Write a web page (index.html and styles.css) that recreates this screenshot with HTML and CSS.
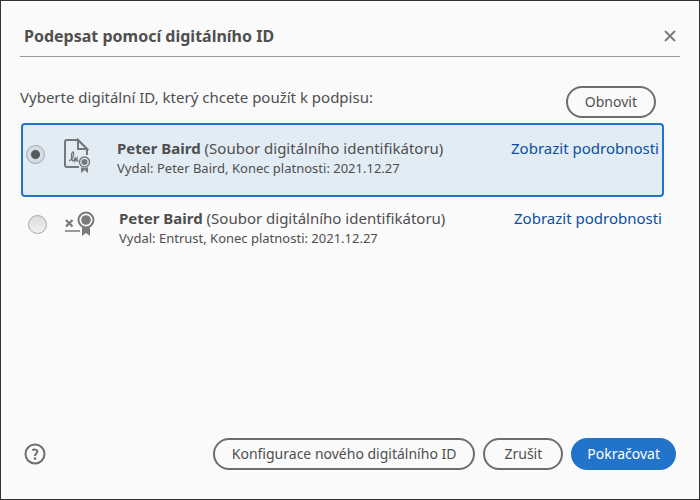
FILE: index.html
```html
<!DOCTYPE html>
<html lang="cs">
<head>
    <meta charset="UTF-8">
    <meta name="viewport" content="width=device-width, initial-scale=1.0">
    <title>Podepsat pomocí digitálního ID</title>
    <link rel="stylesheet" href="styles.css">
</head>
<body>
    <form class="dialog">
        <header class="dialog-header">
            <h1>Podepsat pomocí digitálního ID</h1>
            <button type="button" class="icon-button" aria-label="Zavřít">
                <svg width="12" height="12" viewBox="0 0 12 12">
                    <path d="M1 1 L11 11 M11 1 L1 11" fill="none" stroke="#7c7c7c" stroke-width="2"/>
                </svg>
            </button>
        </header>

        <div class="intro">
            <p id="prompt">Vyberte digitální ID, který chcete použít k podpisu:</p>
            <button type="button" class="pill">Obnovit</button>
        </div>

        <!-- List of IDs -->
        <div class="id-list" role="radiogroup" aria-labelledby="prompt">
            <div class="id-row selected">
                <input type="radio" name="digitalId" id="id1" checked>
                <svg class="id-icon" width="32" height="40" viewBox="0 0 32 40">
                    <path d="M16 29 H4 Q2 29 2 27 V4 Q2 2 4 2 H15 L24 11 V17" fill="none" stroke="#74787b" stroke-width="2"/>
                    <path d="M15 2 V11 H24 Z" fill="#e2ecf5" stroke="#74787b" stroke-width="2"/>
                    <path d="M6 23 C9 22 12 16 10 14 C8 14 8 22 10 23 C11 23 11 21 12 20 V23 L14 20 V23 H16" fill="none" stroke="#74787b" stroke-width="1.300"/>
                    <path d="M18 26 H25 V35 L21.500 32 L18 35 Z" fill="#74787b"/>
                    <circle cx="21.500" cy="24" r="6.200" fill="#e2ecf5"/>
                    <circle cx="21.500" cy="24" r="5" fill="#e2ecf5" stroke="#74787b" stroke-width="1.400"/>
                    <circle cx="21.500" cy="24" r="3" fill="#74787b"/>
                </svg>
                <label class="id-text" for="id1">
                    <span class="id-name"><b>Peter Baird</b> (Soubor digitálního identifikátoru)</span>
                    <span class="id-detail">Vydal: Peter Baird, Konec platnosti: 2021.12.27</span>
                </label>
                <a href="#" class="details">Zobrazit podrobnosti</a>
            </div>
            <div class="id-row">
                <input type="radio" name="digitalId" id="id2">
                <svg class="id-icon" width="32" height="40" viewBox="0 0 32 40">
                    <path d="M1 12 L7.500 18.500 M7.500 12 L1 18.500" fill="none" stroke="#7b7b7b" stroke-width="2.400"/>
                    <path d="M0 23 H15" stroke="#9a9a9a" stroke-width="2"/>
                    <path d="M17 17 H25 V28 L21 25 L17 28 Z" fill="#7b7b7b"/>
                    <circle cx="21" cy="12" r="7.500" fill="#fafafa" stroke="#7b7b7b" stroke-width="2"/>
                    <circle cx="21" cy="12" r="4.800" fill="#7b7b7b"/>
                </svg>
                <label class="id-text" for="id2">
                    <span class="id-name"><b>Peter Baird</b> (Soubor digitálního identifikátoru)</span>
                    <span class="id-detail">Vydal: Entrust, Konec platnosti: 2021.12.27</span>
                </label>
                <a href="#" class="details">Zobrazit podrobnosti</a>
            </div>
        </div>

        <footer class="dialog-footer">
            <button type="button" class="icon-button help" aria-label="Nápověda">
                <svg width="22" height="22" viewBox="0 0 22 22">
                    <circle cx="11" cy="11" r="9.500" fill="none" stroke="#6e6e6e" stroke-width="2"/>
                    <path d="M8.300 7.300 C9.500 6.300 13.400 6 13.400 8.600 C13.400 10.600 11 10.600 11 13" fill="none" stroke="#6e6e6e" stroke-width="1.900"/>
                    <circle cx="11" cy="15.600" r="1.300" fill="#6e6e6e"/>
                </svg>
            </button>
            <button type="button" class="pill">Konfigurace nového digitálního ID</button>
            <button type="button" class="pill cancel">Zrušit</button>
            <button type="submit" class="pill primary">Pokračovat</button>
        </footer>
    </form>
</body>
</html>
```
FILE: styles.css
```css
* {
    box-sizing: border-box;
}

body {
    margin: 0;
    font-family: "Noto Sans", "Open Sans", sans-serif;
    font-size: 15px;
    line-height: 20px;
    color: #4f4f4f;
    background: #fafafa;
}

.dialog {
    display: flex;
    flex-direction: column;
    min-height: 100vh;
    padding: 14px 19px 29px;
    border: 1px solid #333;
}

.dialog-header {
    display: flex;
    align-items: center;
    justify-content: space-between;
    height: 42px;
    padding: 0 4px;
    border-bottom: 1px solid #999;
}

h1 {
    margin: 0;
    font-size: 16px;
    font-weight: bold;
}

.icon-button {
    display: flex;
    padding: 0;
    border: none;
    background: none;
    cursor: pointer;
}

.intro {
    display: flex;
    justify-content: space-between;
    padding: 29px 24px 5px 0;
}

.intro p {
    margin: 1px 0 0;
}

.pill {
    height: 32px;
    padding: 0 17px;
    border: 2px solid #6e6e6e;
    border-radius: 16px;
    background: transparent;
    color: #4f4f4f;
    font-family: inherit;
    font-size: 14px;
    line-height: 20px;
    cursor: pointer;
}

.pill.cancel {
    padding: 0 19px;
}

.pill.primary {
    padding: 0 14px;
    border-color: #2174ca;
    background: #2174ca;
    color: #fff;
}

.id-list {
    margin: 0 16px 0 1px;
}

.id-row {
    display: flex;
    align-items: flex-start;
    padding: 11px 2px 11px 7px;
}

.id-row.selected {
    padding: 13px 3px 17px;
    border: 2px solid #2174ca;
    border-radius: 4px;
    background: #e2ecf5;
}

.id-row input {
    appearance: none;
    width: 19px;
    height: 19px;
    margin: 7px 18px 0 0;
    border: 1px solid #a5a8aa;
    border-radius: 50%;
    background: linear-gradient(#dcdcdc, #f2f2f2);
}

.id-row input:checked {
    background: radial-gradient(circle, #54595c 4px, #d3dce4 5px);
}

.id-icon {
    flex: none;
    margin-right: 22px;
}

.id-text {
    flex: 1;
}

.id-name,
.id-detail {
    display: block;
}

.id-detail {
    font-size: 13px;
}

.details {
    color: #0d4fa0;
    text-decoration: none;
}

.dialog-footer {
    display: flex;
    align-items: center;
    gap: 8px;
    margin-top: auto;
    padding: 0 4px;
}

.help {
    margin-right: auto;
}
```
